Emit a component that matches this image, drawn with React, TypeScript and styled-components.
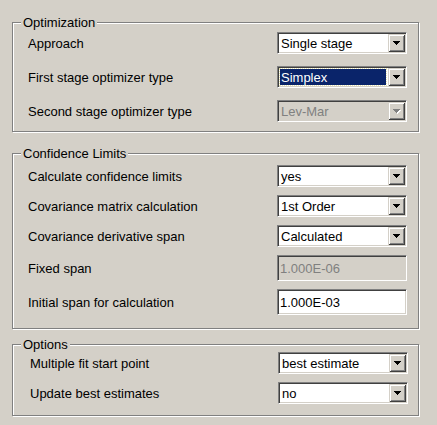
import styled, { createGlobalStyle } from "styled-components";

const Global = createGlobalStyle`
  html, body {
    margin: 0;
    padding: 0;
    background: #d4d0c8;
  }
  body {
    font-family: "Liberation Sans", Arial, sans-serif;
    font-size: 13px;
    color: #000;
  }
`;

const Page = styled.div`
  width: 437px;
  height: 425px;
  overflow: hidden;
`;

// etched windows group box
const Group = styled.section<{ $mt: number; $pt: number; $pb: number; $gap: number; $pl: number; $pr: number }>`
  position: relative;
  box-sizing: border-box;
  width: 407px;
  margin: ${(p) => p.$mt}px 0 0 12px;
  padding: ${(p) => p.$pt}px ${(p) => p.$pr}px ${(p) => p.$pb}px ${(p) => p.$pl}px;
  border: 1px solid #808080;
  box-shadow: inset 1px 1px 0 #fff, 1px 1px 0 #fff;
  display: flex;
  flex-direction: column;
  gap: ${(p) => p.$gap}px;
`;

const Legend = styled.span`
  position: absolute;
  top: -8px;
  left: 8px;
  padding: 0 2px;
  line-height: 15px;
  background: #d4d0c8;
`;

const Row = styled.div<{ $h: number }>`
  height: ${(p) => p.$h}px;
  display: flex;
  align-items: center;
  justify-content: space-between;
`;

const Label = styled.span`
  line-height: 15px;
  white-space: nowrap;
`;

const Sunken = styled.div<{ $h: number; $disabled?: boolean }>`
  box-sizing: border-box;
  width: 130px;
  height: ${(p) => p.$h}px;
  padding: 1px;
  display: flex;
  border: 1px solid;
  border-color: #808080 #fff #fff #808080;
  box-shadow: inset 1px 1px 0 #404040, inset -1px -1px 0 #d4d0c8;
  background: ${(p) => (p.$disabled ? "#d4d0c8" : "#fff")};
`;

const Value = styled.div<{ $selected?: boolean; $disabled?: boolean }>`
  flex: 1;
  display: flex;
  align-items: center;
  margin: 1px 2px 1px 1px;
  padding-left: 1px;
  white-space: nowrap;
  overflow: hidden;
  color: ${(p) => (p.$disabled ? "#808080" : p.$selected ? "#fff" : "#000")};
  background: ${(p) => (p.$selected ? "#0a246a" : "transparent")};
  outline: ${(p) => (p.$selected ? "1px dotted #e8e4b0" : "none")};
`;

const TextValue = styled.div<{ $disabled?: boolean }>`
  display: flex;
  align-items: center;
  padding-left: 1px;
  color: ${(p) => (p.$disabled ? "#808080" : "#000")};
`;

const DropButton = styled.div`
  width: 17px;
  flex-shrink: 0;
  display: flex;
  align-items: center;
  justify-content: center;
  background: #d4d0c8;
  box-shadow: inset 1px 1px 0 #d4d0c8, inset -1px -1px 0 #404040, inset 2px 2px 0 #fff,
    inset -2px -2px 0 #808080;
`;

const Arrow = ({ disabled }: { disabled?: boolean }) => (
  <svg width="8" height="5" viewBox="0 0 8 5" shapeRendering="crispEdges">
    {disabled && <path d="M1 1h7v1h-1v1h-1v1h-1v1h-1v-1h-1v-1h-1v-1h-1z" fill="#fff" />}
    <path d="M0 0h7v1h-1v1h-1v1h-1v1h-1v-1h-1v-1h-1v-1h-1z" fill={disabled ? "#808080" : "#000"} />
  </svg>
);

const Combo = ({ value, selected, disabled }: { value: string; selected?: boolean; disabled?: boolean }) => (
  <Sunken $h={22} $disabled={disabled}>
    <Value $selected={selected} $disabled={disabled}>
      {value}
    </Value>
    <DropButton>
      <Arrow disabled={disabled} />
    </DropButton>
  </Sunken>
);

const TextBox = ({ value, disabled }: { value: string; disabled?: boolean }) => (
  <Sunken $h={26} $disabled={disabled}>
    <TextValue $disabled={disabled}>{value}</TextValue>
  </Sunken>
);

export default function App() {
  return (
    <Page>
      <Global />
      <Group $mt={22} $pt={9} $pb={9} $gap={12} $pl={15} $pr={11}>
        <Legend>Optimization</Legend>
        <Row $h={22}>
          <Label>Approach</Label>
          <Combo value="Single stage" />
        </Row>
        <Row $h={22}>
          <Label>First stage optimizer type</Label>
          <Combo value="Simplex" selected />
        </Row>
        <Row $h={22}>
          <Label>Second stage optimizer type</Label>
          <Combo value="Lev-Mar" disabled />
        </Row>
      </Group>

      <Group $mt={21} $pt={11} $pb={13} $gap={8} $pl={15} $pr={11}>
        <Legend>Confidence Limits</Legend>
        <Row $h={22}>
          <Label>Calculate confidence limits</Label>
          <Combo value="yes" />
        </Row>
        <Row $h={22}>
          <Label>Covariance matrix calculation</Label>
          <Combo value="1st Order" />
        </Row>
        <Row $h={22}>
          <Label>Covariance derivative span</Label>
          <Combo value="Calculated" />
        </Row>
        <Row $h={26}>
          <Label>Fixed span</Label>
          <TextBox value="1.000E-06" disabled />
        </Row>
        <Row $h={26}>
          <Label>Initial span for calculation</Label>
          <TextBox value="1.000E-03" />
        </Row>
      </Group>

      <Group $mt={15} $pt={7} $pb={11} $gap={8} $pl={17} $pr={10}>
        <Legend>Options</Legend>
        <Row $h={22}>
          <Label>Multiple fit start point</Label>
          <Combo value="best estimate" />
        </Row>
        <Row $h={22}>
          <Label>Update best estimates</Label>
          <Combo value="no" />
        </Row>
      </Group>
    </Page>
  );
}
